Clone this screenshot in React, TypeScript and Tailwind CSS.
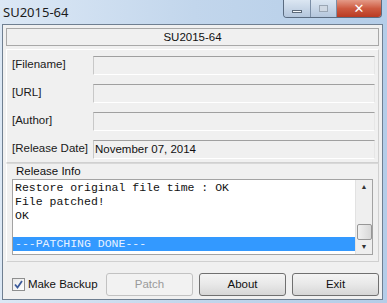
import React from 'react';

const ui = { fontFamily: '"Liberation Sans", Arial, sans-serif' };
const mono = { fontFamily: '"Liberation Mono", "Courier New", monospace' };

const Field: React.FC<{ label: string; value?: string }> = ({ label, value }) => (
  <div className="flex items-center h-[28px]">
    <span className="w-[86px] pl-[5px] whitespace-nowrap text-[11.5px] text-[#1a1a1a]">{label}</span>
    <div className="w-[282px] h-[19px] border border-t-[#a0a0a0] border-l-[#c8c8c8] border-r-[#e6e6e6] border-b-[#ffffff] bg-[#f0f0f0] text-[11.5px] leading-[17px] pl-[1px] text-[#111]">
      {value}
    </div>
  </div>
);

const Button: React.FC<{ label: string; disabled?: boolean }> = ({ label, disabled }) => (
  <button
    className={
      disabled
        ? 'w-[87px] h-[23px] rounded-[3px] border border-[#c2c2c2] bg-[#f2f2f2] text-[11.5px] text-[#9a9a9a]'
        : 'w-[87px] h-[23px] rounded-[3px] border border-[#707070] bg-gradient-to-b from-[#f4f4f4] via-[#e8e8e8] to-[#d6d6d6] text-[11.5px] text-[#111]'
    }
  >
    {label}
  </button>
);

export default function App() {
  return (
    <div
      className="w-[387px] h-[303px] overflow-hidden bg-gradient-to-r from-[#dce8f5] via-[#c2d6ec] to-[#b4cde8] flex flex-col"
      style={ui}
    >
      {/* title bar */}
      <div className="h-[24px] flex items-start justify-between">
        <span className="pl-[3px] pt-[4px] text-[13px] leading-[17px] text-[#1c1c1c]" style={{ fontFamily: '"Noto Sans", "Open Sans", sans-serif' }}>
          SU2015-64
        </span>
        <div className="flex mr-[5px] h-[18px] border border-[#5a6b80] border-t-0 rounded-b-[4px] overflow-hidden">
          <div className="w-[27px] bg-gradient-to-b from-[#dbe6f2] to-[#b4c6dc] border-r border-[#7b8ea6] flex items-center justify-center">
            <div className="w-[10px] h-[3px] bg-[#f7f9fb] border border-[#5d6a7a] mt-[5px]" />
          </div>
          <div className="w-[26px] bg-gradient-to-b from-[#dbe6f2] to-[#b4c6dc] border-r border-[#7b8ea6] flex items-center justify-center">
            <div className="w-[9px] h-[7px] border border-[#9aa6b4] bg-[#cfd8e3]" />
          </div>
          <div className="w-[44px] bg-gradient-to-b from-[#e49a87] via-[#cd5a40] to-[#b93a22] flex items-center justify-center">
            <span className="text-white font-bold text-[13px] leading-none" style={{ fontFamily: '"DejaVu Sans", sans-serif' }}>
              ✕
            </span>
          </div>
        </div>
      </div>

      {/* client area */}
      <div className="ml-[2px] mr-[4px] mb-[3px] flex-1 border border-[#6f7f91] bg-[#f0f0f0] flex flex-col px-[3px] pt-[3px]">
        <div className="h-[18px] border border-[#a8a8a8] bg-[#f0f0f0] text-center text-[11.5px] leading-[16px] text-[#111]">
          SU2015-64
        </div>

        <div className="mt-[3px] border border-t-[#ffffff] border-l-[#ffffff] border-r-[#d0d0d0] border-b-[#d0d0d0] pt-[1px] h-[114px]">
          <Field label="[Filename]" />
          <Field label="[URL]" />
          <Field label="[Author]" />
          <Field label="[Release Date]" value="November 07, 2014" />
        </div>

        <div className="h-[99px] border border-t-[#d8d8d8] border-l-[#ffffff] border-r-[#d0d0d0] border-b-[#d0d0d0] px-[5px]">
          <div className="text-[11.5px] leading-[14px] pl-[4px] text-[#111]">Release Info</div>
          <div className="flex h-[76px] mt-[1px] border border-[#a3a3a3]">
            <div className="flex-1 bg-white pt-[1px] text-[11.5px] leading-[14px] text-[#111]" style={mono}>
              <div className="pl-[2px]">Restore original file time : OK</div>
              <div className="pl-[2px]">File patched!</div>
              <div className="pl-[2px]">OK</div>
              <div className="h-[14px]" />
              <div className="pl-[2px] bg-[#3399ff] text-[#e8f2ff]">---PATCHING DONE---</div>
            </div>
            <div className="w-[17px] bg-[#efefef] border-l border-[#e2e2e2] flex flex-col items-center">
              <span className="text-[7px] leading-[14px] text-[#333]">▲</span>
              <div className="flex-1" />
              <div className="w-[15px] h-[16px] rounded-[2px] border border-[#979797] bg-gradient-to-r from-[#f1f1f1] to-[#d8d8d8]" />
              <span className="text-[7px] leading-[14px] text-[#333]">▼</span>
            </div>
          </div>
        </div>

        <div className="flex items-center mt-[11px] pl-[6px]">
          <div className="w-[13px] h-[13px] border border-[#8e8f8f] bg-gradient-to-br from-[#e8e8e8] to-[#ffffff] flex items-center justify-center">
            <svg width="9" height="9" viewBox="0 0 9 9">
              <path d="M1 4.5 L3.5 7.5 L8 1" fill="none" stroke="#3c5a9a" strokeWidth="1.8" />
            </svg>
          </div>
          <span className="ml-[3px] text-[11.5px] text-[#111] w-[79px] whitespace-nowrap">Make Backup</span>
          <div className="flex gap-[6px]">
            <Button label="Patch" disabled />
            <Button label="About" />
            <Button label="Exit" />
          </div>
        </div>
      </div>
    </div>
  );
}
